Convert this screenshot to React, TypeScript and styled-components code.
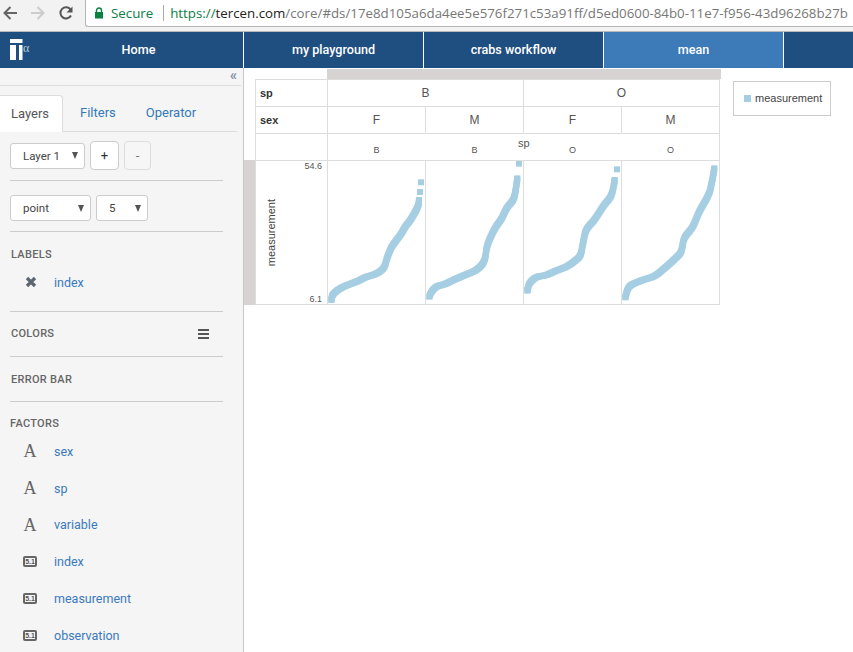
import React from "react";
import styled, { createGlobalStyle } from "styled-components";

const Global = createGlobalStyle`
  html, body { margin: 0; padding: 0; background: #fff; overflow: hidden; }
  * { box-sizing: border-box; }
`;

const Page = styled.div`
  width: 853px;
  height: 652px;
  display: flex;
  flex-direction: column;
  overflow: hidden;
  font-family: Roboto, "Liberation Sans", sans-serif;
`;

/* browser chrome */
const Chrome = styled.div`
  height: 32px;
  flex: none;
  background: #f2f2f2;
  border-bottom: 1px solid #b9b9b9;
  display: flex;
  align-items: flex-start;
`;
const ChromeButtons = styled.div`
  width: 85px;
  height: 26px;
  flex: none;
  display: flex;
  align-items: center;
  padding-left: 2px;
  gap: 12px;
`;
const UrlBar = styled.div`
  flex: 1;
  min-width: 0;
  height: 27px;
  background: #fff;
  border: 1px solid #b4b4b4;
  border-top: none;
  border-right: none;
  border-bottom-left-radius: 3px;
  display: flex;
  align-items: center;
  padding-left: 8px;
  font-family: "Open Sans", sans-serif;
  font-size: 13.3px;
  white-space: nowrap;
  overflow: hidden;
`;
const LockWrap = styled.span`
  flex: none;
  width: 10px;
  height: 12px;
  display: flex;
`;
const Secure = styled.span`
  flex: none;
  color: #0b8043;
  margin-left: 7px;
`;
const UrlDivider = styled.span`
  flex: none;
  width: 1px;
  height: 16px;
  background: #aaa;
  margin: 0 6px 0 10px;
`;
const UrlPart = styled.span<{ $c: string }>`
  flex: none;
  color: ${(p) => p.$c};
`;

/* nav */
const Nav = styled.nav`
  height: 36px;
  flex: none;
  background: #1f4e80;
  display: flex;
`;
const NavHome = styled.div`
  width: 244px;
  flex: none;
  border-right: 1px solid #fff;
  display: flex;
  align-items: center;
`;
const LogoWrap = styled.div`
  width: 30px;
  height: 22px;
  margin-left: 10px;
  flex: none;
  display: flex;
`;
const NavLabel = styled.div<{ $active?: boolean }>`
  width: 180px;
  flex: none;
  display: flex;
  align-items: center;
  justify-content: center;
  padding-bottom: 2px;
  color: #fff;
  font-size: 12.6px;
  font-weight: 500;
  border-right: 1px solid #fff;
  background: ${(p) => (p.$active ? "#3d7ab8" : "transparent")};
`;
const HomeText = styled.div`
  flex: 1;
  text-align: center;
  color: #fff;
  font-size: 12.6px;
  font-weight: 500;
  padding: 0 6px 2px 0;
`;

/* body */
const Body = styled.div`
  flex: 1;
  display: flex;
  min-height: 0;
`;
const Sidebar = styled.aside`
  width: 244px;
  flex: none;
  background: #f5f5f5;
  border-right: 1px solid #c8c8c8;
  display: flex;
  flex-direction: column;
  overflow: hidden;
`;
const CollapseBar = styled.div`
  height: 18px;
  flex: none;
  margin-right: 2px;
  border-bottom: 1px solid #ddd;
  text-align: right;
  padding-right: 4px;
  color: #7d8fa3;
  font-size: 14px;
  line-height: 15px;
  font-weight: 700;
`;
const Tabs = styled.div`
  height: 37px;
  flex: none;
  margin-top: 9px;
  margin-right: 6px;
  border-bottom: 1px solid #ddd;
  display: flex;
`;
const Tab = styled.div<{ $active?: boolean }>`
  height: 37px;
  padding: 0 ${(p) => (p.$active ? "11px" : "15px")} 2px;
  width: ${(p) => (p.$active ? "63px" : "auto")};
  margin-right: ${(p) => (p.$active ? "2px" : "0")};
  display: flex;
  align-items: center;
  font-size: 13px;
  color: ${(p) => (p.$active ? "#555" : "#337ab7")};
  background: ${(p) => (p.$active ? "#fff" : "transparent")};
  ${(p) =>
    p.$active
      ? "border: 1px solid #ddd; border-left: none; border-bottom: none; border-top-right-radius: 4px;"
      : ""}
`;
const Section = styled.section<{ $h: number }>`
  height: ${(p) => p.$h}px;
  flex: none;
  margin: 0 20px 0 10px;
  border-bottom: 1px solid #ccc;
`;
const Controls = styled.div<{ $top: number }>`
  display: flex;
  align-items: center;
  gap: 5px;
  padding-top: ${(p) => p.$top}px;
`;
const SelectBox = styled.div<{ $w: number }>`
  width: ${(p) => p.$w}px;
  height: 26px;
  background: #fff;
  border: 1px solid #ccc;
  border-radius: 3px;
  display: flex;
  align-items: center;
  justify-content: space-between;
  padding: 0 6px 0 12px;
  font-size: 11.5px;
  color: #444;
`;
const Caret = styled.span`
  width: 0;
  height: 0;
  border-left: 3.5px solid transparent;
  border-right: 3.5px solid transparent;
  border-top: 7px solid #555;
`;
const SquareButton = styled.div<{ $w: number; $dim?: boolean }>`
  width: ${(p) => p.$w}px;
  height: 29px;
  background: ${(p) => (p.$dim ? "#f6f6f6" : "#fff")};
  border: 1px solid ${(p) => (p.$dim ? "#ddd" : "#ccc")};
  border-radius: 4px;
  display: flex;
  align-items: center;
  justify-content: center;
  font-size: 13px;
  color: ${(p) => (p.$dim ? "#777" : "#333")};
`;
const SectionTitle = styled.div<{ $top: number }>`
  padding-top: ${(p) => p.$top}px;
  padding-left: 1px;
  font-size: 11px;
  line-height: 13px;
  font-weight: 500;
  letter-spacing: 0.3px;
  color: #666;
  display: flex;
  justify-content: space-between;
  align-items: center;
  padding-right: 14px;
`;
const LabelRow = styled.div`
  margin-top: 13px;
  display: flex;
  align-items: center;
  height: 16px;
  padding-left: 15px;
  gap: 17px;
`;
const Link = styled.span`
  font-size: 12.5px;
  color: #3a7abc;
`;
const FactorsBlock = styled.div`
  padding-left: 10px;
`;
const FactorsTitle = styled(SectionTitle)`
  padding-left: 0;
`;
const FactorRow = styled.div`
  height: 36.8px;
  display: flex;
  align-items: center;
  gap: 17px;
  padding-left: 13px;
`;
const FactorList = styled.div`
  margin-top: 3px;
`;
const TextIcon = styled.span`
  width: 14px;
  text-align: center;
  font-family: "Liberation Serif", serif;
  font-size: 18px;
  line-height: 18px;
  color: #666;
`;
const NumIcon = styled.span`
  width: 14px;
  height: 11px;
  border: 2px solid #666;
  border-radius: 2px;
  display: flex;
  align-items: center;
  justify-content: center;
  font-family: "Liberation Sans", sans-serif;
  font-size: 7px;
  font-weight: 700;
  line-height: 7px;
  color: #555;
`;

/* main */
const Main = styled.main`
  flex: 1;
  display: flex;
  align-items: flex-start;
  padding-top: 1px;
`;
const Grid = styled.div`
  position: relative;
  display: grid;
  grid-template-columns: 11px 73px repeat(4, 98px);
  grid-template-rows: 10px 27px 27px 27px 145px;
  width: 476px;
  font-family: "Liberation Sans", sans-serif;
`;
const TopBand = styled.div`
  grid-column: 3 / 7;
  margin-left: -1px;
  margin-right: -1px;
  background: #d7d3d3;
`;
const SideBand = styled.div`
  grid-column: 1;
  grid-row: 5;
  background: #d7d3d3;
`;
const Blank = styled.div<{ $col: number }>`
  grid-column: ${(p) => p.$col};
`;
const Cell = styled.div<{ $span?: number; $noSide?: boolean; $first?: boolean }>`
  grid-column: span ${(p) => p.$span ?? 1};
  border-top: 1px solid #ddd;
  border-right: 1px solid ${(p) => (p.$noSide ? "transparent" : "#ddd")};
  ${(p) => (p.$first ? "border-left: 1px solid #ddd;" : "")}
  display: flex;
  align-items: center;
  justify-content: center;
  font-size: 12px;
  color: #555;
`;
const HeadCell = styled(Cell)`
  justify-content: flex-start;
  padding-left: 4px;
  font-weight: 700;
  font-size: 11px;
  color: #333;
`;
const SmallCell = styled(Cell)`
  font-size: 9px;
  padding-top: 6px;
`;
const OverLabel = styled.span`
  position: absolute;
  left: 274px;
  top: 68px;
  font-size: 11px;
  color: #555;
`;
const AxisCell = styled(Cell)`
  border-bottom: 1px solid #ddd;
  justify-content: space-between;
  align-items: stretch;
  padding: 0 5px 0 0;
`;
const AxisTitle = styled.span`
  writing-mode: vertical-rl;
  transform: rotate(180deg);
  align-self: center;
  font-size: 11px;
  color: #444;
  margin-left: 9px;
`;
const Ticks = styled.div`
  display: flex;
  flex-direction: column;
  justify-content: space-between;
  align-items: flex-end;
  font-size: 9px;
  line-height: 10px;
  color: #555;
`;
const PanelCell = styled(Cell)`
  border-bottom: 1px solid #ddd;
  align-items: stretch;
  justify-content: stretch;
`;
const PlotSvg = styled.svg`
  width: 97px;
  height: 143px;
  display: block;
`;
const Legend = styled.div`
  margin: 12px 0 0 13px;
  width: 98px;
  height: 35px;
  border: 1px solid #ccc;
  display: flex;
  align-items: center;
  padding: 0 0 1px 10px;
  gap: 4px;
  font-family: "Liberation Sans", sans-serif;
  font-size: 11px;
  color: #444;
`;
const Swatch = styled.span`
  width: 7px;
  height: 7px;
  background: #a6cee3;
`;

type P = [number, number];
const rel = (ox: number, a: P[]): P[] => a.map(([x, y]) => [x / 3 + ox, y / 3 + 160]);

const panels: { ox: number; line: P[]; dots: P[] }[] = [
  {
    ox: 328,
    line: rel(327, [[13, 420], [17, 405], [30, 392], [50, 380], [70, 372], [95, 362], [115, 352], [140, 344], [158, 335], [172, 320], [180, 295], [192, 265], [205, 245], [222, 222], [235, 200], [250, 180], [265, 155], [274, 135], [276, 120]]),
    dots: rel(327, [[279, 96], [282, 67]]),
  },
  {
    ox: 426,
    line: rel(425, [[13, 410], [20, 395], [35, 380], [60, 372], [90, 358], [120, 345], [150, 332], [170, 315], [180, 295], [185, 265], [193, 240], [210, 205], [230, 175], [245, 145], [265, 118], [272, 90], [277, 55]]),
    dots: rel(425, [[282, 11]]),
  },
  {
    ox: 524,
    line: rel(523, [[13, 392], [20, 370], [40, 352], [70, 345], [100, 332], [130, 320], [155, 303], [172, 285], [180, 250], [190, 210], [215, 178], [240, 140], [265, 105], [275, 60]]),
    dots: rel(523, [[282, 28]]),
  },
  {
    ox: 622,
    line: rel(621, [[13, 412], [25, 380], [60, 362], [100, 348], [130, 325], [160, 298], [180, 275], [190, 235], [215, 200], [235, 155], [262, 105], [272, 70], [280, 25]]),
    dots: [],
  },
];

function sample(line: P[]): P[] {
  const out: P[] = [];
  const at = (i: number) => line[Math.max(0, Math.min(line.length - 1, i))];
  for (let i = 0; i < line.length - 1; i++) {
    const [p0, p1, p2, p3] = [at(i - 1), at(i), at(i + 1), at(i + 2)];
    const n = Math.max(1, Math.ceil(Math.hypot(p2[0] - p1[0], p2[1] - p1[1]) / 1.2));
    for (let k = 0; k < n; k++) {
      const t = k / n;
      const f = (j: 0 | 1) =>
        0.5 *
        (2 * p1[j] +
          (p2[j] - p0[j]) * t +
          (2 * p0[j] - 5 * p1[j] + 4 * p2[j] - p3[j]) * t * t +
          (3 * p1[j] - p0[j] - 3 * p2[j] + p3[j]) * t * t * t);
      out.push([f(0), f(1)]);
    }
  }
  out.push(line[line.length - 1]);
  return out;
}

const Plot = ({ ox, line, dots }: { ox: number; line: P[]; dots: P[] }) => (
  <PlotSvg viewBox={`${ox} 161 97 143`}>
    {[...sample(line), ...dots].map(([x, y], i) => (
      <rect key={i} x={x - 3} y={y - 3} width={6} height={6} fill="#a6cee3" />
    ))}
  </PlotSvg>
);

const Logo = () => (
  <svg width="22" height="22" viewBox="0 0 22 22">
    <rect x="0" y="0" width="12.5" height="4" fill="#fff" />
    <rect x="0" y="6" width="6" height="15" fill="#fff" />
    <rect x="9" y="6" width="3.5" height="15" fill="#fff" />
    <text x="13" y="13" fontSize="12" fill="#b8c8da" fontFamily="Liberation Serif, serif">α</text>
  </svg>
);

const BackIcon = ({ color }: { color: string }) => (
  <svg width="16" height="16" viewBox="0 0 16 16">
    <path d="M15 8H3M8.5 2 2.5 8l6 6" fill="none" stroke={color} strokeWidth="2" />
  </svg>
);
const ForwardIcon = ({ color }: { color: string }) => (
  <svg width="16" height="16" viewBox="0 0 16 16">
    <path d="M1 8h12M7.5 2l6 6-6 6" fill="none" stroke={color} strokeWidth="2" />
  </svg>
);
const ReloadIcon = () => (
  <svg width="16" height="16" viewBox="0 0 16 16">
    <path d="M13 10.5A5.6 5.6 0 1 1 12.6 4.6" fill="none" stroke="#555" strokeWidth="2" />
    <path d="M14.5 1.5v6h-6z" fill="#555" />
  </svg>
);
const LockIcon = () => (
  <svg width="10" height="12" viewBox="0 0 10 12">
    <path d="M2.5 5V3.5a2.5 2.5 0 0 1 5 0V5" fill="none" stroke="#0b8043" strokeWidth="1.4" />
    <rect x="1" y="5" width="8" height="6.5" fill="#0b8043" />
  </svg>
);
const CrossIcon = () => (
  <svg width="12" height="12" viewBox="0 0 12 12">
    <path d="M2 2 10 10M10 2 2 10" stroke="#5c6670" strokeWidth="3.2" />
  </svg>
);
const MenuIcon = () => (
  <svg width="11" height="10" viewBox="0 0 11 10">
    <path d="M0 0h11v2H0zM0 4h11v2H0zM0 8h11v2H0z" fill="#555" />
  </svg>
);

export default function App() {
  return (
    <Page>
      <Global />
      <Chrome>
        <ChromeButtons>
          <BackIcon color="#666" />
          <ForwardIcon color="#ccc" />
          <ReloadIcon />
        </ChromeButtons>
        <UrlBar>
          <LockWrap>
            <LockIcon />
          </LockWrap>
          <Secure>Secure</Secure>
          <UrlDivider />
          <UrlPart $c="#0b8043">https://</UrlPart>
          <UrlPart $c="#222">tercen.com</UrlPart>
          <UrlPart $c="#777">/core/#ds/17e8d105a6da4ee5e576f271c53a91ff/d5ed0600-84b0-11e7-f956-43d96268b27b</UrlPart>
        </UrlBar>
      </Chrome>
      <Nav>
        <NavHome>
          <LogoWrap>
            <Logo />
          </LogoWrap>
          <HomeText>Home</HomeText>
        </NavHome>
        <NavLabel>my playground</NavLabel>
        <NavLabel>crabs workflow</NavLabel>
        <NavLabel $active>mean</NavLabel>
      </Nav>
      <Body>
        <Sidebar>
          <CollapseBar>«</CollapseBar>
          <Tabs>
            <Tab $active>Layers</Tab>
            <Tab>Filters</Tab>
            <Tab>Operator</Tab>
          </Tabs>
          <Section $h={49}>
            <Controls $top={9}>
              <SelectBox $w={75}>
                Layer 1 <Caret />
              </SelectBox>
              <SquareButton $w={29}>+</SquareButton>
              <SquareButton $w={27} $dim>
                -
              </SquareButton>
            </Controls>
          </Section>
          <Section $h={51}>
            <Controls $top={14}>
              <SelectBox $w={81}>
                point <Caret />
              </SelectBox>
              <SelectBox $w={52}>
                5 <Caret />
              </SelectBox>
            </Controls>
          </Section>
          <Section $h={80}>
            <SectionTitle $top={16}>LABELS</SectionTitle>
            <LabelRow>
              <CrossIcon />
              <Link>index</Link>
            </LabelRow>
          </Section>
          <Section $h={45}>
            <SectionTitle $top={15}>
              COLORS <MenuIcon />
            </SectionTitle>
          </Section>
          <Section $h={45}>
            <SectionTitle $top={16}>ERROR BAR</SectionTitle>
          </Section>
          <FactorsBlock>
            <FactorsTitle $top={15}>FACTORS</FactorsTitle>
            <FactorList>
              {["sex", "sp", "variable"].map((f) => (
                <FactorRow key={f}>
                  <TextIcon>A</TextIcon>
                  <Link>{f}</Link>
                </FactorRow>
              ))}
              {["index", "measurement", "observation"].map((f) => (
                <FactorRow key={f}>
                  <NumIcon>5.1</NumIcon>
                  <Link>{f}</Link>
                </FactorRow>
              ))}
            </FactorList>
          </FactorsBlock>
        </Sidebar>
        <Main>
          <Grid>
            <Blank $col={1} />
            <Blank $col={2} />
            <TopBand />
            <Blank $col={1} />
            <HeadCell $first>sp</HeadCell>
            <Cell $span={2}>B</Cell>
            <Cell $span={2}>O</Cell>
            <Blank $col={1} />
            <HeadCell $first>sex</HeadCell>
            <Cell>F</Cell>
            <Cell>M</Cell>
            <Cell>F</Cell>
            <Cell>M</Cell>
            <Blank $col={1} />
            <Cell $first />
            <SmallCell $noSide>B</SmallCell>
            <SmallCell $noSide>B</SmallCell>
            <SmallCell $noSide>O</SmallCell>
            <SmallCell>O</SmallCell>
            <OverLabel>sp</OverLabel>
            <SideBand />
            <AxisCell $first>
              <AxisTitle>measurement</AxisTitle>
              <Ticks>
                <span>54.6</span>
                <span>6.1</span>
              </Ticks>
            </AxisCell>
            {panels.map((p) => (
              <PanelCell key={p.ox}>
                <Plot {...p} />
              </PanelCell>
            ))}
          </Grid>
          <Legend>
            <Swatch />
            measurement
          </Legend>
        </Main>
      </Body>
    </Page>
  );
}
